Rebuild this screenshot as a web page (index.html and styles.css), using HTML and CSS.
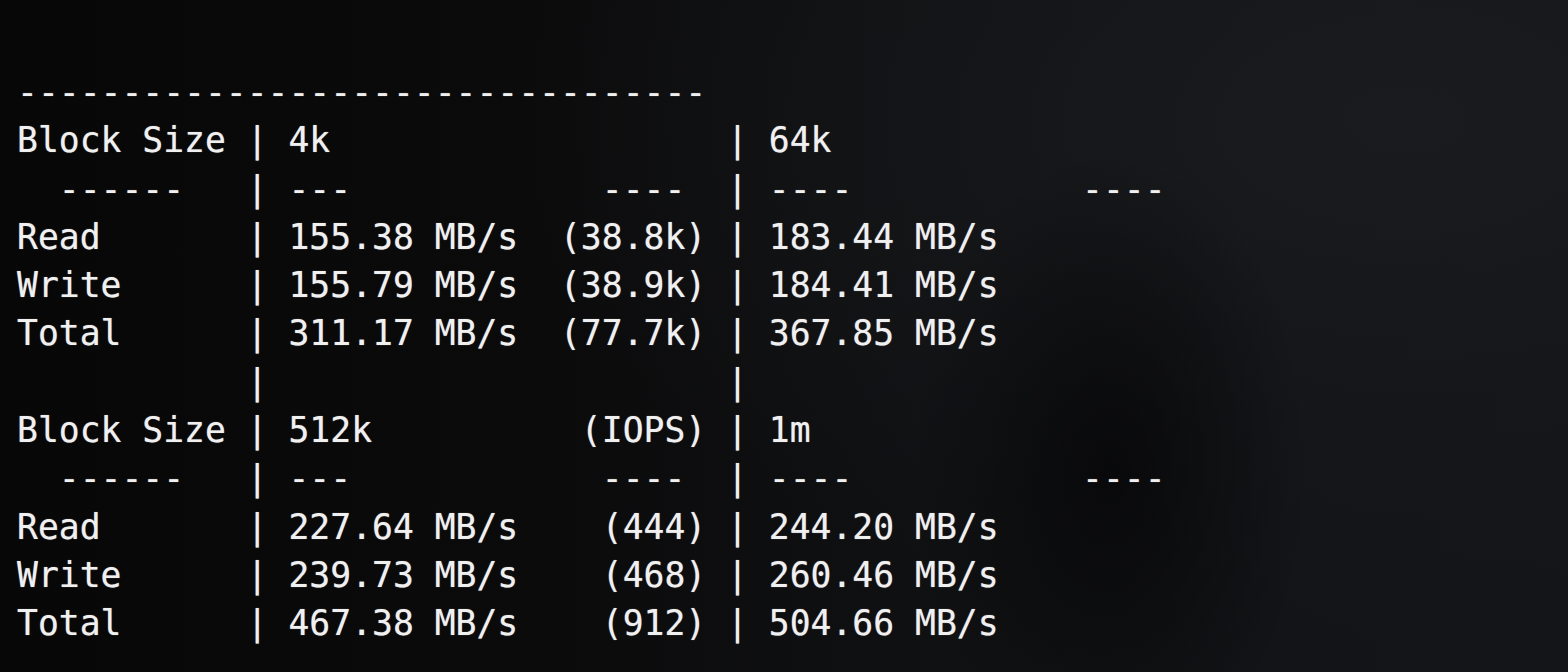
FILE: index.html
```html
<!DOCTYPE html>
<html lang="en">
<head>
<meta charset="utf-8">
<title>fio Disk Speed Tests</title>
<link rel="stylesheet" href="styles.css">
</head>
<body>
<main class="screen">
<pre class="term">---------------------------------
Block Size | 4k                   | 64k
  ------   | ---            ----  | ----           ----
Read       | 155.38 MB/s  (38.8k) | 183.44 MB/s
Write      | 155.79 MB/s  (38.9k) | 184.41 MB/s
Total      | 311.17 MB/s  (77.7k) | 367.85 MB/s
           |                      |
Block Size | 512k          (IOPS) | 1m
  ------   | ---            ----  | ----           ----
Read       | 227.64 MB/s    (444) | 244.20 MB/s
Write      | 239.73 MB/s    (468) | 260.46 MB/s
Total      | 467.38 MB/s    (912) | 504.66 MB/s</pre>
</main>
</body>
</html>
```

FILE: styles.css
```css
html, body {
  margin: 0;
  padding: 0;
  height: 100%;
  overflow: hidden;
}

body {
  background: #0a0a0b;
}

.screen {
  width: 1568px;
  height: 672px;
  box-sizing: border-box;
  padding: 68px 0 0 17px;
  background:
    radial-gradient(ellipse 200px 320px at 1110px 470px, rgba(5,5,6,0.75), rgba(5,5,6,0) 100%),
    radial-gradient(ellipse 900px 520px at 1400px 120px, #1a1b1e 0%, rgba(24,25,28,0.6) 45%, rgba(12,12,13,0) 100%),
    linear-gradient(90deg, #070707 0%, #0b0b0c 35%, #121315 70%, #141518 100%);
}

.term {
  margin: 0;
  font-family: "DejaVu Sans Mono", "Liberation Mono", monospace;
  font-size: 34.7px;
  line-height: 48.3px;
  color: #f0f0f0;
  white-space: pre;
  text-shadow: 0 0 1px rgba(240,240,240,0.6);
}
```
